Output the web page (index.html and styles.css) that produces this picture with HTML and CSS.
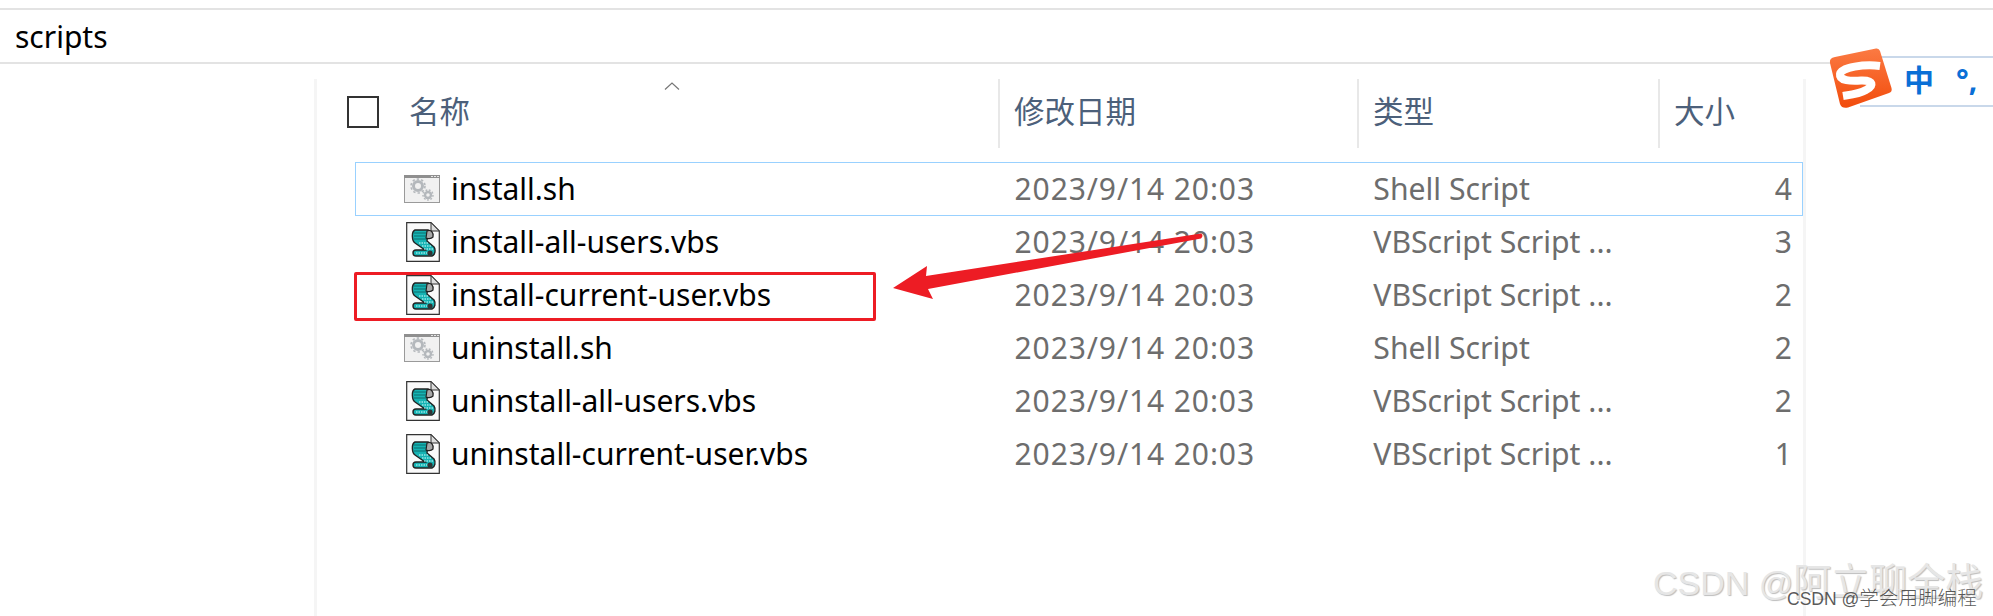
FILE: index.html
```html
<!DOCTYPE html>
<html lang="en">
<head>
    <meta charset="UTF-8">
    <meta name="viewport" content="width=device-width, initial-scale=1.0">
    <title>scripts</title>
    <link rel="stylesheet" href="styles.css">
</head>
<body>

    <!-- shared file icons -->
    <svg class="defs" width="0" height="0">
        <symbol id="iconShell" viewBox="0 0 36 28">
            <rect x="0.5" y="0.5" width="35" height="27" fill="#f1f1f1" stroke="#9a9a9a"/>
            <rect x="0" y="0" width="36" height="3" fill="#8f8f8f"/>
            <rect x="27" y="1" width="2" height="1" fill="#e6e6e6"/>
            <rect x="30" y="1" width="2" height="1" fill="#e6e6e6"/>
            <rect x="33" y="1" width="2" height="1" fill="#e6e6e6"/>
            <circle cx="14" cy="11" r="4.5" fill="none" stroke="#b4b8bc" stroke-width="3"/>
            <circle cx="14" cy="11" r="7" fill="none" stroke="#b4b8bc" stroke-width="1.6" stroke-dasharray="2.4 2.1"/>
            <circle cx="24" cy="20" r="3" fill="none" stroke="#b4b8bc" stroke-width="2.4"/>
            <circle cx="24" cy="20" r="5" fill="none" stroke="#b4b8bc" stroke-width="1.4" stroke-dasharray="1.8 1.6"/>
        </symbol>
        <symbol id="iconScript" viewBox="0 0 34 40">
            <path d="M0.7 0.7H25L33.3 9V39.3H0.7Z" fill="#fafafa" stroke="#333" stroke-width="1.2"/>
            <path d="M25 0.7V9H33.3Z" fill="#ddd" stroke="#333" stroke-width="1"/>
            <path d="M9 8H22L21 19L28 25C30 28 29 33 26 34H10C6 34 6 28 10 28H19L9 21C6 19 5 10 9 8Z" fill="#16b3b3" stroke="#222" stroke-width="1.4"/>
            <path d="M21 9C25 7 28 11 27 15C25 17 21 17 20 16Z" fill="#a8a8a8" stroke="#222" stroke-width="1.2"/>
            <path d="M8 11H20M8 14H20M8 17H20" stroke="#0b6f6f" stroke-width="1.1"/>
            <path d="M13 21H22M16 24H26M18 27H28M10 31H22" stroke="#d8ffff" stroke-width="1.2" stroke-dasharray="1.5 1"/>
            <circle cx="24" cy="31" r="2.6" fill="#333"/>
        </symbol>
    </svg>

    <div class="path-bar">scripts</div>

    <div class="main">
        <div class="nav-pane"></div>

        <div class="content">
            <div class="head">
                <div class="col-name head-name">
                    <span class="check"></span>
                    <span>名称</span>
                    <svg class="sort" width="16" height="8" viewBox="0 0 16 8">
                        <path d="M1 7.5L8 1L15 7.5" fill="none" stroke="#777" stroke-width="1.2"/>
                    </svg>
                </div>
                <div class="col-date head-cell">修改日期</div>
                <div class="col-type head-cell">类型</div>
                <div class="col-size head-cell">大小</div>
            </div>

            <div class="rows">
                <div class="row selected">
                    <div class="col-name"><svg class="icon-shell"><use href="#iconShell"/></svg>install.sh</div>
                    <div class="col-date">2023/9/14 20:03</div>
                    <div class="col-type">Shell Script</div>
                    <div class="col-size">4</div>
                </div>
                <div class="row">
                    <div class="col-name"><svg class="icon-script"><use href="#iconScript"/></svg>install-all-users.vbs</div>
                    <div class="col-date">2023/9/14 20:03</div>
                    <div class="col-type">VBScript Script ...</div>
                    <div class="col-size">3</div>
                </div>
                <div class="row">
                    <div class="col-name"><svg class="icon-script"><use href="#iconScript"/></svg>install-current-user.vbs</div>
                    <div class="col-date">2023/9/14 20:03</div>
                    <div class="col-type">VBScript Script ...</div>
                    <div class="col-size">2</div>
                </div>
                <div class="row">
                    <div class="col-name"><svg class="icon-shell"><use href="#iconShell"/></svg>uninstall.sh</div>
                    <div class="col-date">2023/9/14 20:03</div>
                    <div class="col-type">Shell Script</div>
                    <div class="col-size">2</div>
                </div>
                <div class="row">
                    <div class="col-name"><svg class="icon-script"><use href="#iconScript"/></svg>uninstall-all-users.vbs</div>
                    <div class="col-date">2023/9/14 20:03</div>
                    <div class="col-type">VBScript Script ...</div>
                    <div class="col-size">2</div>
                </div>
                <div class="row">
                    <div class="col-name"><svg class="icon-script"><use href="#iconScript"/></svg>uninstall-current-user.vbs</div>
                    <div class="col-date">2023/9/14 20:03</div>
                    <div class="col-type">VBScript Script ...</div>
                    <div class="col-size">1</div>
                </div>
            </div>
        </div>
    </div>

    <!-- annotation drawn over the list -->
    <div class="red-box"></div>
    <svg class="arrow" width="330" height="80" viewBox="0 0 330 80">
        <path d="M13 63L47 41L46 51L321 8.5Q324 10.500 321 13.500L48 64L53 74Z" fill="#ed1c24"/>
    </svg>

    <!-- input method bar -->
    <div class="ime">
        <span class="ime-zh">中</span>
        <span class="ime-punct">°,</span>
    </div>
    <svg class="ime-logo" width="64" height="62" viewBox="0 0 64 62">
        <defs>
            <linearGradient id="logoFill" x1="0" y1="0" x2="0" y2="1">
                <stop offset="0" stop-color="#fb7a43"/>
                <stop offset="1" stop-color="#f24c0c"/>
            </linearGradient>
        </defs>
        <path d="M6 10L47 1.5Q50 1 51 4L62.5 41Q63.5 45 60 46L19 60.5Q13 62 11 57L1 16Q0 11 6 10Z" fill="url(#logoFill)"/>
        <path d="M51 19C36 17 12 20 11 27C10 34 22 34 32 33.500C45 33 45 39 37 43C30 47 20 48 14 49" fill="none" stroke="#fff" stroke-width="8"/>
    </svg>

    <!-- watermarks -->
    <div class="mark-large"><span class="mark-latin">CSDN @</span>阿立聊全栈</div>
    <div class="mark-small"><span class="mark-latin">CSDN @</span>学会用脚编程</div>

</body>
</html>
```

FILE: styles.css
```css
* {
    box-sizing: border-box;
}
html, body {
    margin: 0;
    height: 616px;
    overflow: hidden;
}
body {
    position: relative;
    padding-top: 8px;
    background: white;
    font-family: "Noto Sans", "Noto Sans CJK SC", sans-serif;
    color: #000;
}
.defs {
    position: absolute;
}
.path-bar {
    height: 56px;
    padding: 2px 0 0 15px;
    border-top: 2px solid #e3e3e3;
    border-bottom: 2px solid #e3e3e3;
    font-size: 30px;
    line-height: 50px;
}
.main {
    display: flex;
    height: 552px;
    padding-top: 15px;
}
.nav-pane {
    width: 314px;
}
.content {
    width: 1492px;
    border-left: 3px solid #f5f5f5;
    border-right: 3px solid #f5f5f5;
}
.head {
    display: flex;
    height: 69px;
    color: #4c607a;
    font-size: 30.5px;
    line-height: 64px;
}
.head-name {
    position: relative;
    display: flex;
    align-items: flex-start;
    gap: 30px;
    padding-left: 30px;
}
.check {
    width: 32px;
    height: 32px;
    margin-top: 17px;
    border: 2px solid #333;
}
.sort {
    position: absolute;
    left: 347px;
    top: 3px;
}
.head-cell {
    padding-left: 14px;
    border-left: 2px solid #e8e8e8;
}
.col-name {
    width: 681px;
}
.col-date {
    width: 359px;
}
.col-type {
    width: 301px;
}
.col-size {
    width: 145px;
}
.rows {
    margin: 14px 0 0 38px;
    width: 1448px;
}
.row {
    display: flex;
    height: 54px;
    margin-bottom: -1px;
    border: 1px solid transparent;
    font-size: 30px;
    line-height: 52px;
}
.row.selected {
    border-color: #99d1ff;
}
.row .col-name {
    display: flex;
    align-items: center;
    width: 643px;
    padding-left: 48px;
}
.row .col-date,
.row .col-type,
.row .col-size {
    color: #6d6d6d;
}
.row .col-date {
    padding-left: 16px;
    letter-spacing: 0.9px;
}
.row .col-type {
    padding-left: 16px;
    font-size: 30.2px;
}
.row .col-size {
    width: 144px;
    padding-right: 10px;
    text-align: right;
}
.icon-shell {
    width: 36px;
    height: 28px;
    margin-right: 11px;
}
.icon-script {
    width: 34px;
    height: 40px;
    margin: 0 11px 0 2px;
}

.red-box {
    position: absolute;
    left: 354px;
    top: 272px;
    width: 522px;
    height: 49px;
    border: 3px solid #ed1c24;
    border-radius: 2px;
}
.arrow {
    position: absolute;
    left: 880px;
    top: 225px;
}

.ime {
    position: absolute;
    left: 1860px;
    top: 56px;
    width: 133px;
    height: 51px;
    padding-left: 44px;
    display: flex;
    background: white;
    border-top: 2px solid #c9d8ea;
    border-bottom: 2px solid #c9d8ea;
    color: #0a6fd6;
    font-weight: 700;
    line-height: 44px;
}
.ime-zh {
    font-size: 30px;
}
.ime-punct {
    margin-left: 22px;
    font-size: 30px;
}
.ime-logo {
    position: absolute;
    left: 1829px;
    top: 47px;
}

.mark-large {
    position: absolute;
    left: 1653px;
    top: 559px;
    font-family: "Liberation Sans", "Noto Sans CJK SC", sans-serif;
    font-size: 38px;
    line-height: 46px;
    white-space: nowrap;
    color: #e6e6e6;
    text-shadow: 1px 1px 1px #bdbdbd;
}
.mark-large .mark-latin {
    font-size: 34px;
}
.mark-small {
    position: absolute;
    left: 1787px;
    top: 587px;
    font-family: "Liberation Sans", "Noto Sans CJK SC", sans-serif;
    font-size: 19.6px;
    line-height: 23px;
    white-space: nowrap;
    color: rgba(60, 60, 60, 0.85);
    font-weight: 300;
}
.mark-small .mark-latin {
    font-size: 17.5px;
}
```
